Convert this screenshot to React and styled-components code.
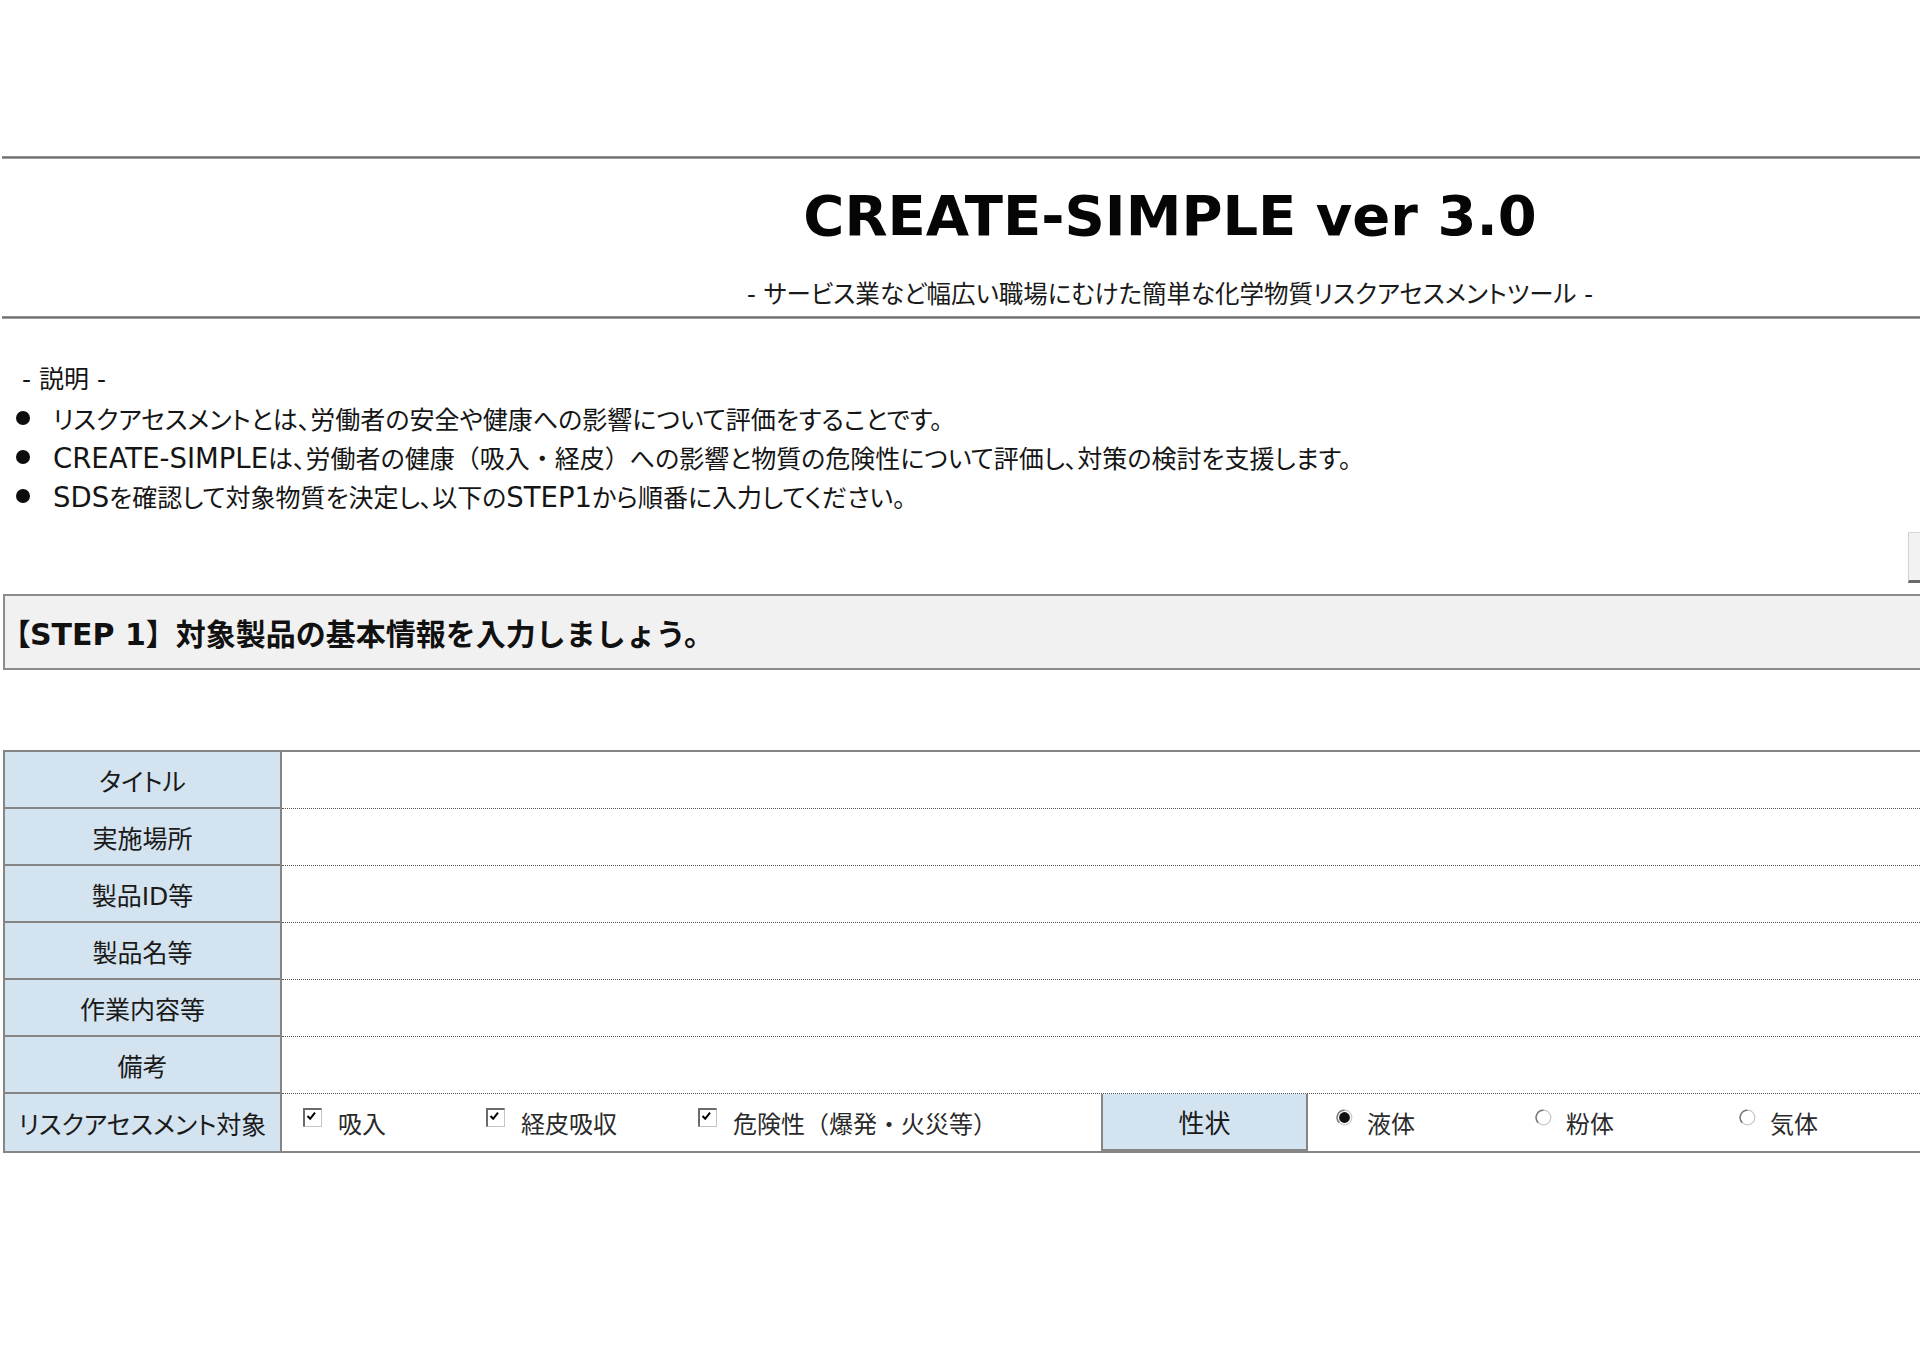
import styled, { createGlobalStyle } from "styled-components";

const GlobalStyle = createGlobalStyle`
    html, body {
        margin: 0;
        padding: 0;
        background: #fff;
    }
    body {
        font-family: "DejaVu Sans", "Noto Sans CJK JP", sans-serif;
        color: #151515;
        overflow-x: hidden;
    }
`;

const rows = ["タイトル", "実施場所", "製品ID等", "製品名等", "作業内容等", "備考"];

const states = [
    { label: "液体", width: 199, checked: true },
    { label: "粉体", width: 204, checked: false },
    { label: "気体", width: 0, checked: false },
];

const CheckIcon = () => (
    <svg width="19" height="19" viewBox="0 0 19 19">
        <rect x="0.5" y="0.5" width="18" height="18" fill="#fff" stroke="#c4c4c4" />
        <path d="M1 18.5 V1 H18.5" fill="none" stroke="#6a6a6a" strokeWidth="2" />
        <path d="M4.5 8 L7.2 10.8 L12 4.6" fill="none" stroke="#000" strokeWidth="2" />
    </svg>
);

const RadioIcon = ({ checked }) => (
    <svg width="17" height="17" viewBox="0 0 17 17">
        <circle cx="8.5" cy="8.5" r="7.3" fill="#fff" stroke="#c8c8c8" strokeWidth="1.2" />
        <path d="M8.5 1.2 A7.3 7.3 0 0 0 3.3 13.7" fill="none" stroke="#7a7a7a" strokeWidth="1.5" />
        {checked && <circle cx="8.5" cy="8.5" r="5.4" fill="#111" />}
    </svg>
);

const App = () => {
    const targets = [
        { label: "吸入", width: 183 },
        { label: "経皮吸収", width: 212 },
        {
            label: (
                <>
                    危険性<Full>（爆発・火災等）</Full>
                </>
            ),
            width: 0,
        },
    ];

    return (
        <>
            <GlobalStyle />
            <Page>
                <Rule />
                <Header>
                    <Title>CREATE-SIMPLE ver 3.0</Title>
                    <SubTitle>- サービス業など幅広い職場にむけた簡単な化学物質リスクアセスメントツール -</SubTitle>
                </Header>
                <Rule $mt={3} />

                <DescHead>- 説明 -</DescHead>
                <BulletList>
                    <BulletItem>
                        <Dot />
                        <span>リスクアセスメントとは、労働者の安全や健康への影響について評価をすることです。</span>
                    </BulletItem>
                    <BulletItem>
                        <Dot />
                        <span>
                            <Latin>CREATE-SIMPLE</Latin>は、労働者の健康<Full>（吸入・経皮）</Full>への影響と物質の危険性について評価し、対策の検討を支援します。
                        </span>
                    </BulletItem>
                    <BulletItem>
                        <Dot />
                        <span>
                            <Latin>SDS</Latin>を確認して対象物質を決定し、以下の<Latin>STEP1</Latin>から順番に入力してください。
                        </span>
                    </BulletItem>
                </BulletList>

                <ButtonRow>
                    <EdgeButton />
                </ButtonRow>

                <StepBox>
                    <Bracket>【</Bracket>STEP 1】対象製品の基本情報を入力しましょう。
                </StepBox>

                <Table>
                    {rows.map((label) => (
                        <Row key={label}>
                            <LabelCell>{label}</LabelCell>
                            <ValueCell />
                        </Row>
                    ))}
                    <Row>
                        <LabelCell $last>リスクアセスメント対象</LabelCell>
                        <LastValue>
                            <OptionGroup $pad={21}>
                                {targets.map((t, i) => (
                                    <Option key={i} $width={t.width} $gap={16}>
                                        <IconBox>
                                            <CheckIcon />
                                        </IconBox>
                                        <span>{t.label}</span>
                                    </Option>
                                ))}
                            </OptionGroup>
                            <StateLabel>性状</StateLabel>
                            <OptionGroup $pad={28}>
                                {states.map((s) => (
                                    <Option key={s.label} $width={s.width} $gap={14}>
                                        <IconBox>
                                            <RadioIcon checked={s.checked} />
                                        </IconBox>
                                        {s.label}
                                    </Option>
                                ))}
                            </OptionGroup>
                        </LastValue>
                    </Row>
                </Table>
            </Page>
        </>
    );
};

const Page = styled.div`
    width: 1920px;
    min-height: 1358px;
    box-sizing: border-box;
    padding-top: 156px;
    overflow: hidden;
`;

const Rule = styled.div`
    height: 3px;
    margin-left: 2px;
    margin-top: ${(props) => props.$mt || 0}px;
    background: linear-gradient(#a4a4a4, #6e6e6e 50%, #b8b8b8);
`;

const Header = styled.div`
    padding-left: 420px;
    text-align: center;
`;

const Title = styled.h1`
    margin: 25px 0 0;
    font-size: 56px;
    line-height: 64px;
    font-weight: 700;
    color: #050505;
`;

const SubTitle = styled.p`
    margin: 29px 0 0;
    font-size: 24.5px;
    line-height: 36px;
    font-feature-settings: "palt";
    color: #1a1a1a;
`;

const DescHead = styled.div`
    margin: 43px 0 0 22px;
    font-size: 25px;
    line-height: 36px;
    font-feature-settings: "palt";
`;

const BulletList = styled.ul`
    list-style: none;
    margin: 0;
    padding: 0 0 0 16px;
`;

const BulletItem = styled.li`
    display: flex;
    align-items: center;
    gap: 23px;
    height: 39px;
    font-size: 25px;
    font-feature-settings: "palt";
    white-space: nowrap;
`;

const Latin = styled.span`
    font-size: 27.5px;
`;

const Full = styled.span`
    font-feature-settings: normal;
`;

const Dot = styled.span`
    flex: none;
    width: 14px;
    height: 14px;
    border-radius: 50%;
    background: #0c0c0c;
`;

const ButtonRow = styled.div`
    display: flex;
    justify-content: flex-end;
    margin-top: 17px;
    height: 51px;
`;

const EdgeButton = styled.div`
    width: 12px;
    box-sizing: border-box;
    background: #f2f2f2;
    border-top: 1px solid #d6d6d6;
    border-left: 1px solid #d0d0d0;
    border-bottom: 3px solid #6a6a6a;
`;

const StepBox = styled.div`
    display: flex;
    align-items: center;
    box-sizing: border-box;
    height: 76px;
    margin: 11px -10px 0 3px;
    padding-left: 10px;
    border: 2px solid #8c8c8c;
    background: #f1f1f1;
    font-size: 30px;
    font-weight: 700;
    color: #111;
    white-space: nowrap;
`;

const Bracket = styled.span`
    font-feature-settings: "palt";
`;

const Table = styled.div`
    margin: 80px -10px 0 3px;
    border-top: 2px solid #858585;
    border-bottom: 2px solid #858585;
    border-left: 2px solid #858585;
`;

const Row = styled.div`
    display: grid;
    grid-template-columns: 277px 1fr;
    height: 57px;
`;

const LabelCell = styled.div`
    display: flex;
    align-items: center;
    justify-content: center;
    box-sizing: border-box;
    background: #d3e3ef;
    border-right: 2px solid #858585;
    border-bottom: ${(props) => (props.$last ? "none" : "2px solid #858585")};
    font-size: 25px;
    font-feature-settings: "palt";
    color: #1a1a1a;
    white-space: nowrap;
`;

const ValueCell = styled.div`
    border-bottom: 1px dotted #555;
`;

const LastValue = styled.div`
    display: grid;
    grid-template-columns: 819px 207px 1fr;
`;

const OptionGroup = styled.div`
    display: flex;
    align-items: center;
    padding-left: ${(props) => props.$pad}px;
`;

const Option = styled.div`
    display: flex;
    align-items: center;
    gap: ${(props) => props.$gap}px;
    width: ${(props) => (props.$width ? `${props.$width}px` : "auto")};
    flex: none;
    font-size: 24px;
    font-feature-settings: "palt";
    color: #2a2a2a;
    white-space: nowrap;
`;

const IconBox = styled.span`
    display: flex;
    margin-bottom: 10px;
`;

const StateLabel = styled(LabelCell)`
    border-left: 2px solid #858585;
    border-right: 2px solid #858585;
    font-size: 26px;
`;

export default App;
